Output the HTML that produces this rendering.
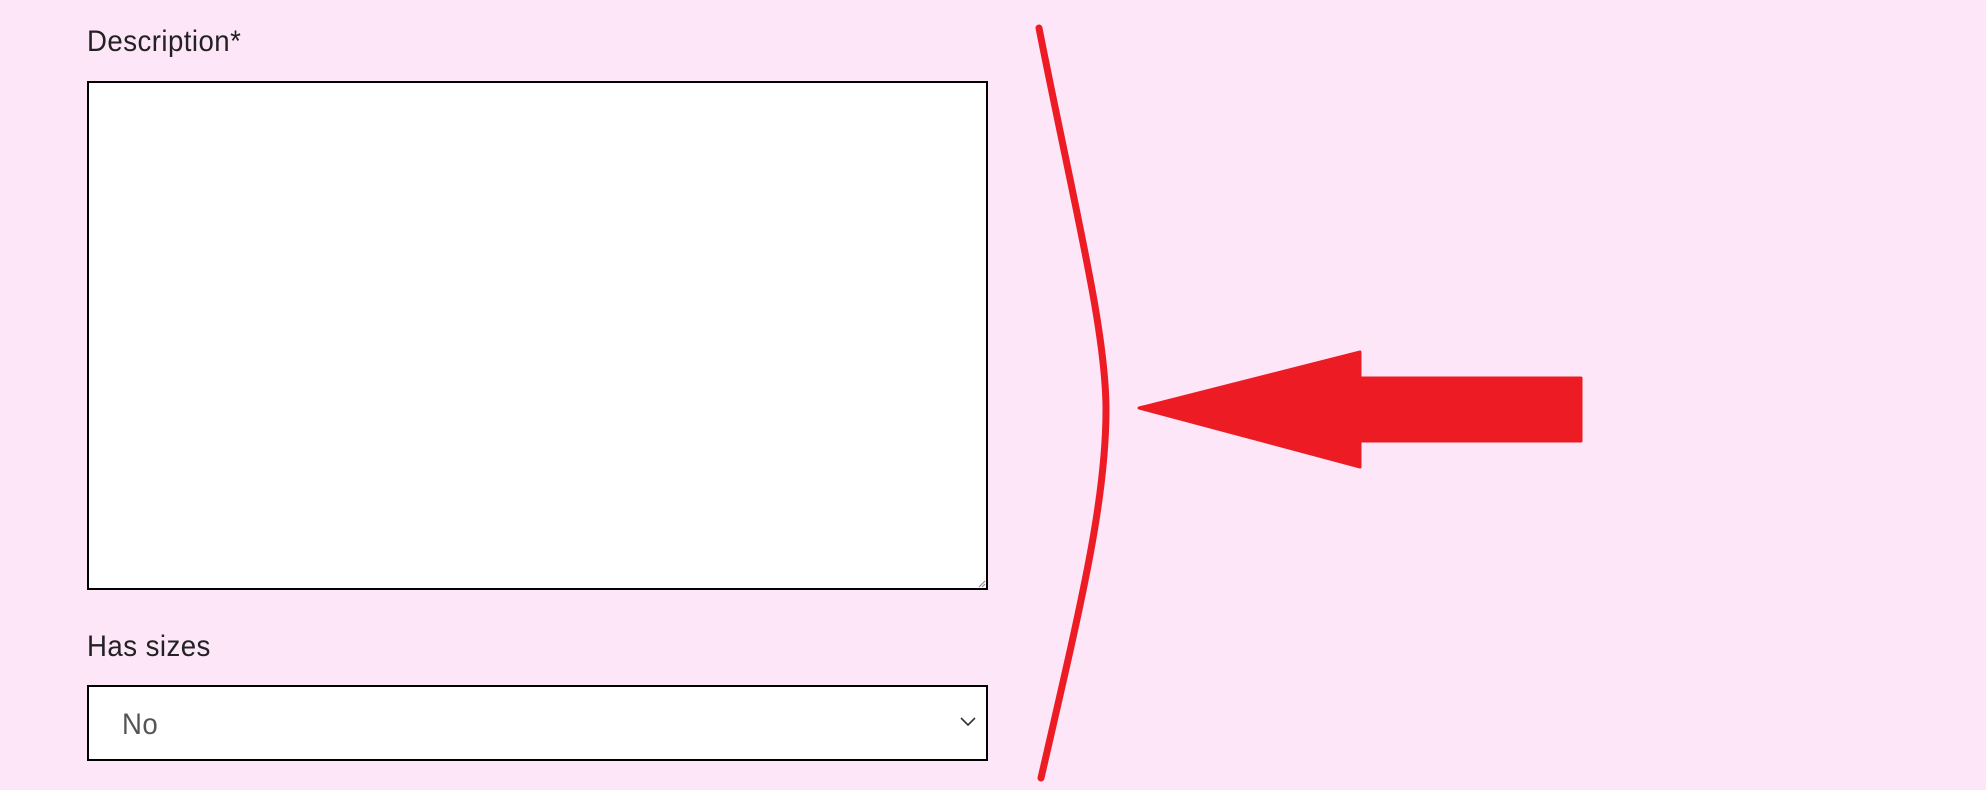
<!DOCTYPE html>
<html><head><style>
html,body{margin:0;width:1986px;height:790px;background:#fde6f8;overflow:hidden;font-family:"Liberation Sans",sans-serif}
.lbl{position:absolute;left:87px;font-size:30px;color:#222;transform:scaleX(.92);transform-origin:left top;letter-spacing:.5px}
.box{position:absolute;left:87px;width:897px;background:#fff;border:2px solid #000}
</style></head><body>
<div class="lbl" style="top:25px">Description*</div>
<div class="box" style="top:81px;height:505px"></div>
<svg style="position:absolute;left:978px;top:580px" width="8" height="8"><path d="M1 7L7 1M4 7L7 4" stroke="#888" stroke-width="1"/></svg>
<div class="lbl" style="top:630px">Has sizes</div>
<div class="box" style="top:685px;height:72px"></div>
<div class="lbl" style="top:708px;left:122px;color:#555">No</div>
<svg style="position:absolute;left:0;top:0" width="1986" height="790">
<path d="M961 718L968 725L975 718" fill="none" stroke="#333" stroke-width="1.6"/>
<path d="M1039 28 C1075 210 1106 330 1106 410 C1106 500 1082 600 1041 778" fill="none" stroke="#ed1c24" stroke-width="7" stroke-linecap="round"/>
<path d="M1139 408 L1360 352 L1360 378 L1581 378 L1581 441 L1360 441 L1360 467 Z" fill="#ed1c24" stroke="#ed1c24" stroke-width="3" stroke-linejoin="round"/>
</svg>
</body></html>
